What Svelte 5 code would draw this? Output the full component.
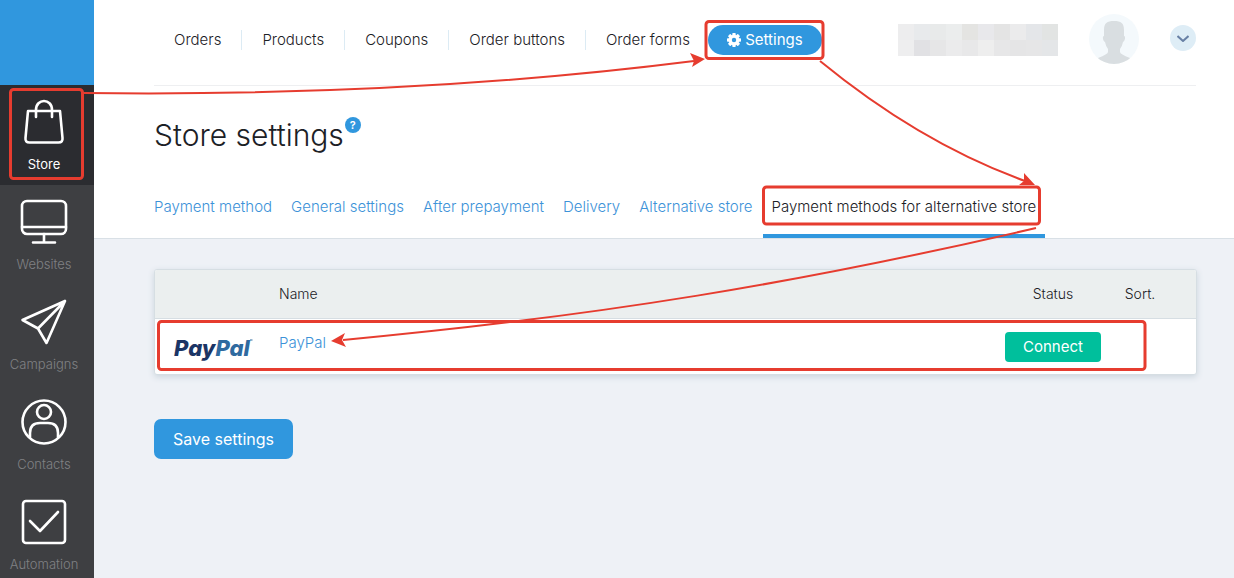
<script>
  const sections = [
    { name: 'Store', icon: 'bag', active: true },
    { name: 'Websites', icon: 'screen' },
    { name: 'Campaigns', icon: 'plane' },
    { name: 'Contacts', icon: 'person' },
    { name: 'Automation', icon: 'check' },
  ];
  const pages = ['Orders', 'Products', 'Coupons', 'Order buttons', 'Order forms'];
  const tabs = [
    'Payment method',
    'General settings',
    'After prepayment',
    'Delivery',
    'Alternative store',
    'Payment methods for alternative store',
  ];
  const tiles = [
    '#ededee', '#e8eaec', '#e8eaea', '#ebeded', '#e4e4e2', '#e8e8eb', '#e4e4e4', '#ebebec', '#e4e6e9', '#e2e4e3',
    '#eeeeef', '#e1e1e4', '#e6e6e7', '#ebebec', '#e8e8e9', '#eeeeee', '#e7e7e8', '#e5e5e6', '#e6e6e7', '#e4e6e8',
  ];
</script>

<div class="app">
  <aside>
    <div class="brand"></div>
    <nav aria-label="Sections">
      {#each sections as s}
        <a href="#{s.icon}" class="section" class:current={s.active}>
          <svg width="48" height="48" viewBox="0 0 48 48" aria-hidden="true">
            {#if s.icon === 'bag'}
              <path d="M8 13H40L42.500 40Q43 44.500 38.500 44.500H9.500Q5 44.500 5.500 40Z" />
              <path d="M16 19V12C16 0 32 0 32 12V19" />
            {:else if s.icon === 'screen'}
              <rect x="2" y="3" width="44" height="33" rx="5" />
              <path d="M2 29H46M24 36V44M13 44.500H35" />
            {:else if s.icon === 'plane'}
              <path d="M45 3L2.500 22L18 30.500L26.500 45ZM45 3L18 30.500" />
            {:else if s.icon === 'person'}
              <circle cx="24" cy="24" r="21.500" />
              <circle cx="24" cy="14" r="7" />
              <path d="M10 39V35Q10 25 20 25H28Q38 25 38 35V39" />
            {:else}
              <rect x="3" y="3" width="42" height="42" rx="3" />
              <path d="M10 23L20 33L38 14" />
            {/if}
          </svg>
          <span>{s.name}</span>
        </a>
      {/each}
    </nav>
  </aside>

  <main>
    <header>
      <div class="topbar">
        <nav class="pages" aria-label="Store pages">
          {#each pages as p}<a href="#{p}">{p}</a>{/each}
        </nav>
        <button class="pill" type="button">
          <svg width="14" height="14" viewBox="0 0 14 14" aria-hidden="true">
            <g fill="#fff">
              {#each [0, 45, 90, 135] as angle}
                <rect x="5.300" y="0" width="3.400" height="14" rx="0.700" transform="rotate({angle} 7 7)" />
              {/each}
              <circle cx="7" cy="7" r="5.200" />
            </g>
            <circle cx="7" cy="7" r="2.200" fill="#3097de" />
          </svg>
          Settings
        </button>
        <div class="account">
          <div class="tiles">
            {#each tiles as color}<i style:background={color}></i>{/each}
          </div>
          <svg class="avatar" width="50" height="50" viewBox="0 0 50 50" aria-hidden="true">
            <defs><clipPath id="round"><circle cx="25" cy="25" r="25" /></clipPath></defs>
            <circle cx="25" cy="25" r="25" fill="#f4f9fc" />
            <path clip-path="url(#round)" fill="#d9dee1" d="M15 16C15 9 18 7 25 7S35 9 35 16V22C37 22 36 27 34 28Q33 33 31 35V38Q31 40 41 44V50H9V44Q19 40 19 38V35Q17 33 16 28C14 27 13 22 15 22Z" />
          </svg>
          <button class="more" type="button" aria-label="Account menu">
            <svg width="12" height="7" viewBox="0 0 12 7" aria-hidden="true"><path d="M0.500 1L6 6L11.500 1" fill="none" stroke="#6880a5" stroke-width="2" /></svg>
          </button>
        </div>
      </div>
      <div class="title">
        <h1>Store settings</h1>
        <button class="help" type="button" aria-label="Help">?</button>
      </div>
      <nav class="tabs" aria-label="Settings">
        {#each tabs as t, i}<a href="#tab{i}" class:selected={i === 5}>{t}</a>{/each}
      </nav>
    </header>

    <div class="content">
      <div class="card">
        <table>
          <thead>
            <tr><th class="logo"></th><th class="name">Name</th><th class="status">Status</th><th class="sort">Sort.</th><th class="end"></th></tr>
          </thead>
          <tbody>
            <tr>
              <td class="logo">
                <svg width="90" height="32" viewBox="0 0 90 32" role="img" aria-label="PayPal">
                  <text x="1" y="25" class="wordmark"><tspan fill="#1b3565">Pay</tspan><tspan fill="#2f6a9f">Pal</tspan></text>
                  <path d="M77 9H79.500" stroke="#2f6a9f" stroke-width="1" />
                </svg>
              </td>
              <td class="name"><a href="#paypal">PayPal</a></td>
              <td class="status"><button class="connect" type="button">Connect</button></td>
              <td></td>
              <td></td>
            </tr>
          </tbody>
        </table>
      </div>
      <button class="save" type="button">Save settings</button>
    </div>
  </main>

  <svg class="notes" width="1234" height="578" viewBox="0 0 1234 578" aria-hidden="true">
    <g fill="none" stroke="#e63c2f" stroke-width="3">
      <rect x="10.500" y="89.500" width="72" height="89" rx="3" />
      <rect x="706" y="21.500" width="117" height="37" rx="3" />
      <rect x="763.500" y="187" width="276" height="37" rx="3" />
      <rect x="158.500" y="321.500" width="986.500" height="48" rx="3" />
    </g>
    <g fill="none" stroke="#e63c2f" stroke-width="2">
      <path d="M84 93Q410 97 694 61" />
      <path d="M820 61Q920 143 1025 181" />
      <path d="M1036 228C800 283 600 316 343 340" />
    </g>
    <g fill="#e63c2f">
      <path d="M705 59L690 53L694 61L692 67Z" />
      <path d="M1035 185L1024 173L1024 181L1019 185Z" />
      <path d="M331 341L345 333L342 340L346 347Z" />
    </g>
  </svg>
</div>

<style>
  :global(body) { margin: 0; background: #eef1f6; }
  .app {
    position: relative;
    display: flex;
    height: 100vh;
    overflow: hidden;
    font-family: Inter, "Liberation Sans", sans-serif;
    font-size: 15px;
    font-weight: 300;
    line-height: 20px;
    color: #1c2126;
  }
  a { color: #3c92d8; text-decoration: none; }
  button { border: 0; padding: 0; font: inherit; color: #fff; cursor: pointer; }
  aside { flex: 0 0 94px; background: #3e3f42; }
  .brand { height: 85px; background: #3097de; }
  .section {
    display: flex;
    flex-direction: column;
    align-items: center;
    gap: 8px;
    height: 87px;
    padding: 13px 6px 0 0;
    color: #808184;
    font-size: 13px;
  }
  .section svg { fill: none; stroke: #fff; stroke-width: 2.6; stroke-linecap: round; stroke-linejoin: round; }
  .section.current { background: #2b2c30; color: #fff; font-weight: 400; }
  main { flex: 1; min-width: 0; }
  header { padding: 0 38px 0 60px; background: #fff; border-bottom: 1px solid #d9e0e6; }
  .topbar { display: flex; align-items: center; height: 86px; border-bottom: 1px solid #eeeff1; box-sizing: border-box; }
  .topbar > * { margin-bottom: 5px; }
  .pages { display: flex; white-space: nowrap; }
  .pages a { padding: 0 20px; color: #1c2126; border-right: 1px solid #dcebf4; }
  .pages a:last-child { padding-right: 18px; border: 0; }
  .pill { display: flex; align-items: center; justify-content: center; gap: 4px; width: 114px; height: 30px; border-radius: 15px; background: #3097de; font-weight: 400; }
  .account { display: flex; align-items: center; margin: 0 0 7px auto; }
  .tiles { display: grid; grid-template-columns: repeat(10, 16px); grid-auto-rows: 16px; margin: 2px 31px 0 0; }
  .avatar { margin-right: 31px; }
  .more { display: grid; place-items: center; width: 26px; height: 26px; margin-bottom: 2px; border-radius: 50%; background: #deedf6; }
  .title { display: flex; align-items: flex-start; gap: 1px; padding-top: 29px; }
  h1 { margin: 0; font-size: 30px; line-height: 40px; font-weight: 300; }
  .help { width: 16px; height: 16px; margin-top: 2px; border-radius: 50%; background: #3097de; font-size: 11px; line-height: 16px; font-weight: 600; }
  .tabs { display: flex; gap: 1px; margin: 40px 0 0 -9px; white-space: nowrap; }
  .tabs a { padding: 2px 9px 17px; border-bottom: 4px solid transparent; }
  .tabs a.selected { color: #1c2126; border-color: #3097de; }
  .content { padding: 30px 37px 30px 60px; }
  .card { border: 1px solid #d6dee3; border-radius: 3px; background: #fff; box-shadow: 0 2px 6px #cbd5dd; overflow: hidden; }
  table { width: 100%; table-layout: fixed; border-collapse: separate; border-spacing: 0; }
  th { height: 49px; padding: 0; background: #ebefef; border-bottom: 1px solid #d6dee3; box-sizing: border-box; font-size: 14px; font-weight: 300; text-align: center; }
  td { height: 55px; padding: 0; text-align: center; }
  th.logo { width: 124px; }
  th.status { width: 126px; }
  th.sort { width: 48px; }
  th.end { width: 32px; }
  td.logo { text-align: left; padding-left: 18px; }
  td.logo svg { display: block; }
  .name { text-align: left; }
  td.name { padding-bottom: 8px; box-sizing: border-box; }
  .wordmark { font: italic 800 22px Inter, sans-serif; }
  .connect { width: 96px; height: 30px; border-radius: 4px; background: #00bf9c; font-weight: 400; }
  .save { margin-top: 44px; padding: 0 19px; height: 40px; border-radius: 7px; background: #3097de; font-size: 16px; font-weight: 400; }
  .notes { position: absolute; left: 0; top: 0; pointer-events: none; }
</style>
